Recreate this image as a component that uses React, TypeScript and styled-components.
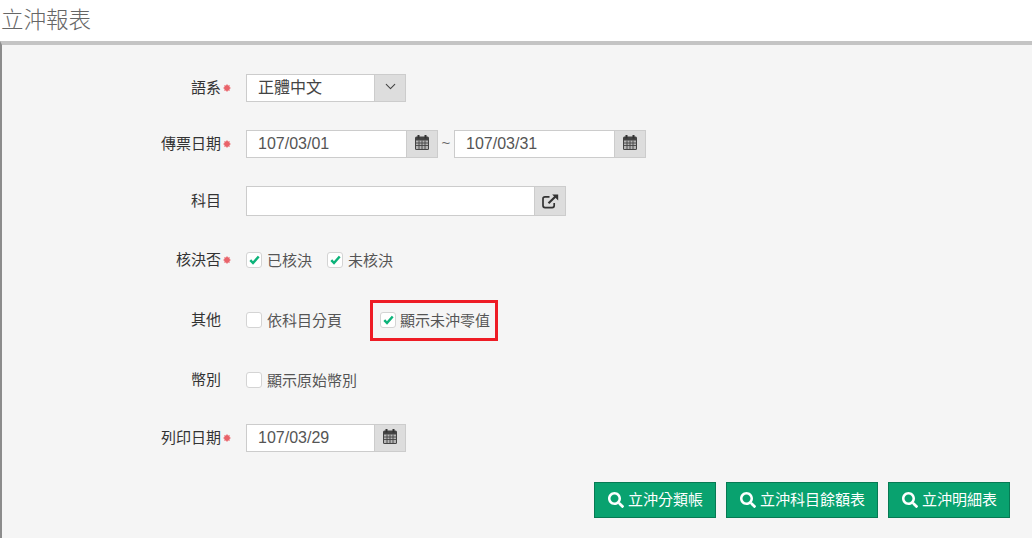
import React from "react";
import styled, { createGlobalStyle } from "styled-components";
import { FaSearch } from "react-icons/fa";
import { ChevronDown } from "lucide-react";

const FONT = `"Liberation Sans", "Noto Sans CJK TC", sans-serif`;

const ExternalIcon = () => (
  <svg width="17" height="15" viewBox="0 0 17 15" fill="none" stroke="#333" strokeWidth="1.7">
    <path d="M12.2 9v2.6a2 2 0 0 1-2 2H3a2 2 0 0 1-2-2V4.8a2 2 0 0 1 2-2h4.5" />
    <path d="M6.5 9.3 14 2" strokeWidth="2.2" />
    <path d="M10.2.6h6v6z" fill="#333" stroke="none" />
  </svg>
);

const CalendarSvg = ({ className }: { className?: string }) => (
  <svg className={className} width="14" height="15" viewBox="0 0 14 15">
    <rect x="0" y="1.5" width="14" height="13.5" rx="1.5" fill="#444" />
    <rect x="2.5" y="0" width="2" height="3.5" fill="#333" />
    <rect x="9.5" y="0" width="2" height="3.5" fill="#333" />
    <rect x="1" y="5.5" width="12" height="8.5" fill="#b5b5b5" />
    <path d="M1 8h12M1 10.500h12M4 5.500v8.500M7 5.500v8.500M10 5.500v8.500" stroke="#444" strokeWidth="0.9" />
  </svg>
);

const CheckIcon = () => (
  <svg width="11" height="10" viewBox="0 0 11 10" fill="none">
    <path d="M1.300 5.200 4 8 9.700 1.500" stroke="#0cb37a" strokeWidth="2.500" />
  </svg>
);

const StarSvg = ({ className }: { className?: string }) => (
  <svg className={className} width="8" height="8" viewBox="0 0 8 8">
    <path
      d="M4 0 5 1.600 6.800 1.200 6.400 3 8 4 6.400 5 6.800 6.800 5 6.400 4 8 3 6.400 1.200 6.800 1.600 5 0 4 1.600 3 1.200 1.200 3 1.600z"
      fill="#e9636a"
    />
  </svg>
);

const App: React.FC = () => {
  return (
    <Page>
      <GlobalStyle />
      <Title>立沖報表</Title>
      <Panel>
        <Form>
          <Row>
            <Label>
              語系
              <Star />
            </Label>
            <Group $width={160}>
              <SelectValue>正體中文</SelectValue>
              <Addon $width={32}>
                <Chevron size={17} strokeWidth={1.5} color="#444" />
              </Addon>
            </Group>
          </Row>
          <Row>
            <Label>
              傳票日期
              <Star />
            </Label>
            <Group $width={192}>
              <Input defaultValue="107/03/01" />
              <Addon $width={32}>
                <CalendarIcon />
              </Addon>
            </Group>
            <Tilde>~</Tilde>
            <Group $width={192}>
              <Input defaultValue="107/03/31" />
              <Addon $width={32}>
                <CalendarIcon />
              </Addon>
            </Group>
          </Row>
          <Row $height={30}>
            <Label>科目</Label>
            <Group $width={320}>
              <Input />
              <Addon $width={32}>
                <ExternalIcon />
              </Addon>
            </Group>
          </Row>
          <Row $height={30} $top={29}>
            <Label>
              核決否
              <Star />
            </Label>
            <Check $checked>已核決</Check>
            <Check $checked>未核決</Check>
          </Row>
          <Row $height={30} $top={30}>
            <Label>其他</Label>
            <Check>依科目分頁</Check>
            <Highlight>
              <Check $checked $tight>
                顯示未沖零值
              </Check>
            </Highlight>
          </Row>
          <Row $height={30} $top={30}>
            <Label>幣別</Label>
            <Check>顯示原始幣別</Check>
          </Row>
          <Row $top={29}>
            <Label>
              列印日期
              <Star />
            </Label>
            <Group $width={160}>
              <Input defaultValue="107/03/29" />
              <Addon $width={32}>
                <CalendarIcon />
              </Addon>
            </Group>
          </Row>
        </Form>
        <Actions>
          <ActionButton>
            <FaSearch size={16} />
            <ButtonText>立沖分類帳</ButtonText>
          </ActionButton>
          <ActionButton>
            <FaSearch size={16} />
            <ButtonText>立沖科目餘額表</ButtonText>
          </ActionButton>
          <ActionButton>
            <FaSearch size={16} />
            <ButtonText>立沖明細表</ButtonText>
          </ActionButton>
        </Actions>
      </Panel>
    </Page>
  );
};

const Check: React.FC<{ $checked?: boolean; $tight?: boolean; children: React.ReactNode }> = ({
  $checked,
  $tight,
  children,
}) => (
  <CheckLabel $tight={$tight}>
    <CheckBox>{$checked && <CheckIcon />}</CheckBox>
    <CheckText>{children}</CheckText>
  </CheckLabel>
);

export default App;

const GlobalStyle = createGlobalStyle`
  html, body {
    margin: 0;
    padding: 0;
    background: #fff;
    overflow: hidden;
  }
  * {
    box-sizing: border-box;
  }
`;

const Page = styled.div`
  display: flex;
  flex-direction: column;
  width: 1032px;
  height: 538px;
  font-family: ${FONT};
  color: #333;
`;

const Title = styled.h1`
  margin: 0;
  height: 41px;
  padding: 4px 0 0 1px;
  font-size: 22.5px;
  line-height: 34px;
  font-weight: 300;
  color: #666;
`;

const Panel = styled.div`
  flex: 1;
  display: flex;
  flex-direction: column;
  background: #f5f5f5;
  border-top: 4px solid #c4c4c4;
  border-left: 2px solid #8c8c8c;
`;

const Form = styled.div`
  display: flex;
  flex-direction: column;
  padding-top: 29px;
`;

const Row = styled.div<{ $height?: number; $top?: number }>`
  display: flex;
  align-items: center;
  height: ${(p) => p.$height ?? 28}px;
  margin-bottom: 28px;
  margin-top: ${(p) => (p.$top ? p.$top - 28 : 0)}px;
`;

const Label = styled.div`
  position: relative;
  width: 219px;
  margin-right: 25px;
  padding-bottom: 3px;
  font-size: 15px;
  text-align: right;
  color: #333;
`;

const Star = styled(StarSvg)`
  position: absolute;
  left: calc(100% + 2px);
  top: 8px;
`;

const Group = styled.div<{ $width: number }>`
  display: flex;
  align-items: stretch;
  width: ${(p) => p.$width}px;
  height: 100%;
  border: 1px solid #ccc;
  background: #fff;
`;

const Input = styled.input`
  flex: 1;
  min-width: 0;
  border: 0;
  outline: 0;
  padding: 0 11px;
  background: #fff;
  font-family: ${FONT};
  font-size: 16px;
  color: #555;
`;

const SelectValue = styled.div`
  flex: 1;
  padding: 0 11px;
  font-size: 16px;
  line-height: 26px;
  color: #444;
`;

const Addon = styled.div<{ $width: number }>`
  display: flex;
  align-items: center;
  justify-content: center;
  flex: none;
  width: ${(p) => p.$width - 1}px;
  background: #ddd;
  border-left: 1px solid #ccc;
  color: #333;
`;

const Chevron = styled(ChevronDown)`
  margin-bottom: 4px;
`;

const CalendarIcon = styled(CalendarSvg)`
  margin-bottom: 3px;
`;

const Tilde = styled.span`
  width: 16px;
  margin-top: -4px;
  font-size: 15px;
  text-align: center;
  color: #666;
`;

const CheckLabel = styled.label<{ $tight?: boolean }>`
  display: inline-flex;
  align-items: center;
  gap: ${(p) => (p.$tight ? 4 : 5)}px;
  margin-right: ${(p) => (p.$tight ? 0 : 15)}px;
  font-size: 15px;
  color: #555;
`;

const CheckText = styled.span`
  padding-bottom: 2px;
`;

const CheckBox = styled.span`
  display: inline-flex;
  align-items: center;
  justify-content: center;
  width: 16px;
  height: 16px;
  background: #fff;
  border: 1px solid #d4d4d4;
  border-radius: 3px;
`;

const Highlight = styled.div`
  display: flex;
  align-items: center;
  width: 128px;
  height: 41px;
  margin-left: 13px;
  padding-left: 7px;
  border: 3px solid #ee1c25;
`;

const Actions = styled.div`
  display: flex;
  justify-content: flex-end;
  gap: 10px;
  padding-right: 22px;
  margin-top: 2px;
`;

const ActionButton = styled.button`
  display: inline-flex;
  align-items: center;
  gap: 4px;
  height: 36px;
  padding: 0 12px 0 13px;
  background: #09a26f;
  border: 1px solid #067a53;
  font-family: ${FONT};
  font-size: 15px;
  color: #fff;
`;

const ButtonText = styled.span`
  padding-bottom: 3px;
`;
